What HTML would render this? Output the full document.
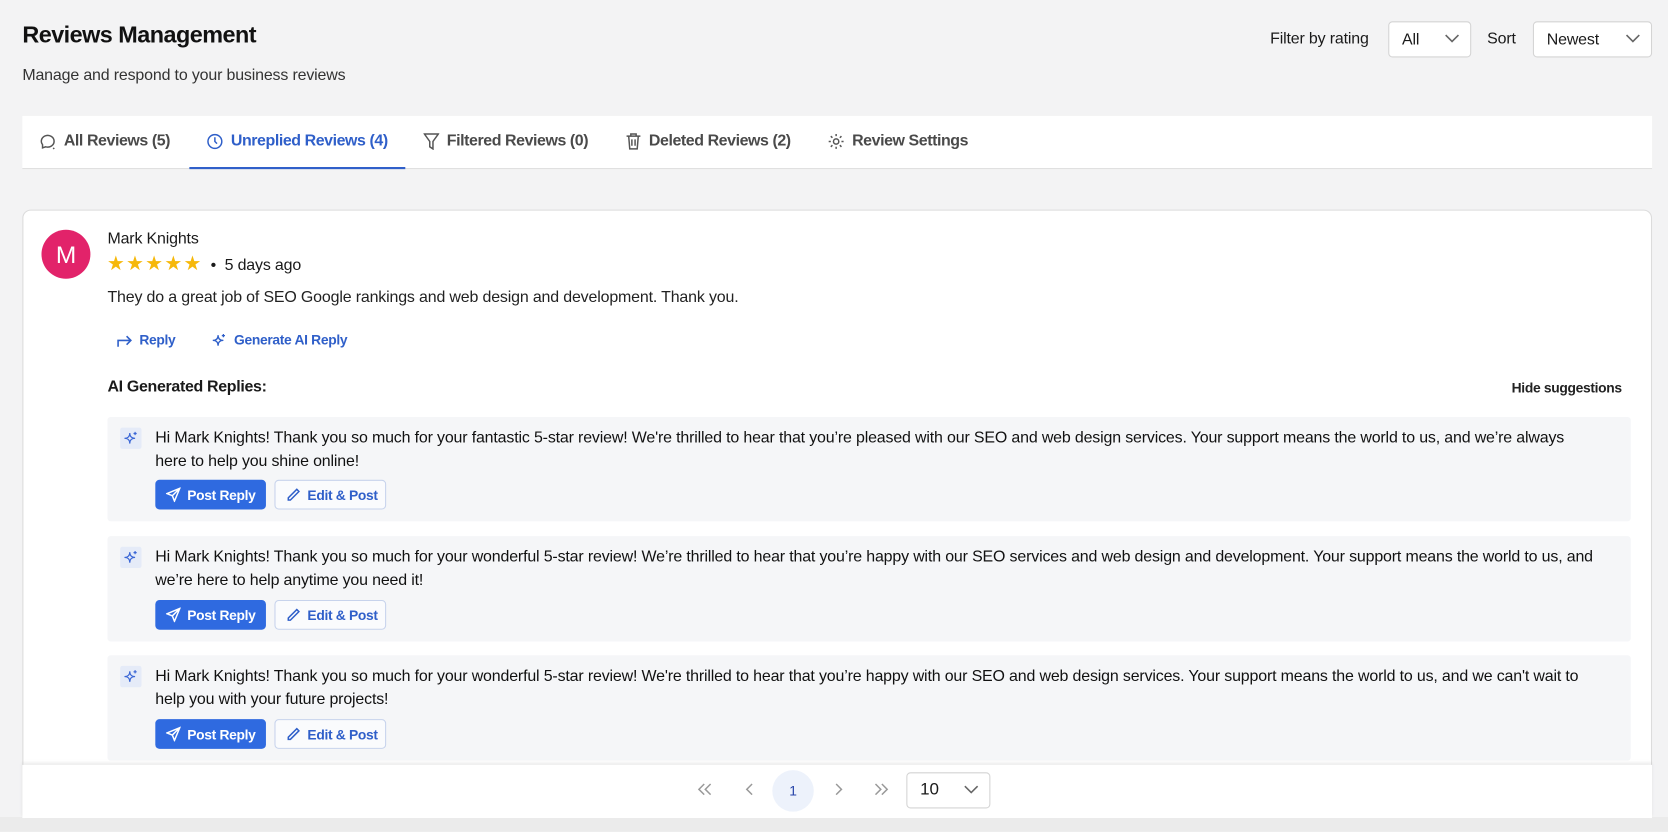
<!DOCTYPE html>
<html><head><meta charset="utf-8"><style>
*{box-sizing:border-box;margin:0;padding:0}
html,body{width:1668px;height:832px;overflow:hidden;background:#f3f3f4;font-family:"Liberation Sans",Arial,sans-serif;color:#1a1a1a}
#w{position:absolute;left:0;top:0;width:1568px;height:782px;overflow:hidden;transform:scale(1.06378);transform-origin:0 0;letter-spacing:-0.15px}
.a{position:absolute}
.sel{position:absolute;background:#fff;border:1px solid #d4d4d4;border-radius:4px;font-size:15px;display:flex;align-items:center;padding-left:12px}
.sel svg{position:absolute;right:10px;top:50%;margin-top:-5px}
.tab{position:absolute;top:124px;font-size:15px;font-weight:bold;color:#4a4a4a;display:flex;align-items:center;gap:7px;letter-spacing:-0.4px}
.sug{position:absolute;left:101px;width:1432px;background:#f5f6f8;border-radius:3px}
.sug .ic{position:absolute;left:12px;top:10px;width:20px;height:20px;background:#e5ebf8;border-radius:2px}
.sug .t{position:absolute;left:45px;top:9px;width:1380px;font-size:15px;line-height:22px;color:#111;white-space:nowrap}
.btn{position:absolute;height:28px;border-radius:4px;font-size:13px;font-weight:bold;display:flex;align-items:center;gap:6px;padding-left:10px;letter-spacing:-0.3px}
.pr{left:45px;width:104px;background:#2f6ae0;color:#fff}
.ep{left:157px;width:105px;background:#fafbfd;border:1px solid #c7d3ec;color:#2f5fc9}
.star{display:inline-block;width:18px;text-align:center}
</style></head><body><div id="w">
<div class="a" style="left:21px;top:20px;font-size:22px;font-weight:bold;color:#111;letter-spacing:-0.5px">Reviews Management</div>
<div class="a" style="left:21px;top:62px;font-size:15px;color:#333">Manage and respond to your business reviews</div>
<div class="a" style="left:1194px;top:28px;font-size:15px">Filter by rating</div>
<div class="sel" style="left:1305px;top:20px;width:78px;height:34px">All<svg width="14" height="9"><path d="M1 1l6 6 6-6" stroke="#666" stroke-width="1.5" fill="none"/></svg></div>
<div class="a" style="left:1398px;top:28px;font-size:15px">Sort</div>
<div class="sel" style="left:1441px;top:20px;width:112px;height:34px">Newest<svg width="14" height="9"><path d="M1 1l6 6 6-6" stroke="#666" stroke-width="1.5" fill="none"/></svg></div>

<div class="a" style="left:21px;top:109px;width:1532px;height:50px;background:#fff;border-bottom:1px solid #ddd"></div>
<div class="a" style="left:178px;top:157px;width:203px;height:2px;background:#2f5fc9"></div>
<div class="tab" style="left:37px"><svg width="16" height="16" fill="none" stroke="#555" stroke-width="1.4"><path d="M3 11a6 5.5 0 1 1 3 2l-3 1z"/><path d="M13 14l1 1"/></svg>All Reviews (5)</div>
<div class="tab" style="left:194px;color:#2f5fc9"><svg width="16" height="16" fill="none" stroke="#2f5fc9" stroke-width="1.4"><circle cx="8" cy="8" r="6.5"/><path d="M8 4v4l2 2"/></svg>Unreplied Reviews (4)</div>
<div class="tab" style="left:398px"><svg width="15" height="16" fill="none" stroke="#555" stroke-width="1.4"><path d="M1 1h13l-5 7v7l-3-2V8z"/></svg>Filtered Reviews (0)</div>
<div class="tab" style="left:588px"><svg width="15" height="16" fill="none" stroke="#555" stroke-width="1.4"><path d="M1 3h13M5 3V1h5v2M3 3l1 12h7l1-12M6 6v6M9 6v6"/></svg>Deleted Reviews (2)</div>
<div class="tab" style="left:778px"><svg width="16" height="16" fill="none" stroke="#555" stroke-width="1.4"><circle cx="8" cy="8" r="2.5"/><path d="M8 1v2M8 13v2M1 8h2M13 8h2M3 3l1.5 1.5M11.5 11.5L13 13M3 13l1.5-1.5M11.5 4.5L13 3"/></svg>Review Settings</div>

<div class="a" style="left:21px;top:197px;width:1532px;height:580px;background:#fff;border:1px solid #dcdcdc;border-radius:8px"></div>
<div class="a" style="left:39px;top:216px;width:46px;height:46px;border-radius:50%;background:#e2236a;color:#fff;font-size:23px;display:flex;align-items:center;justify-content:center">M</div>
<div class="a" style="left:101px;top:216px;font-size:15px">Mark Knights</div>
<div class="a" style="left:100px;top:239px;font-size:19px;color:#f6b80a;line-height:20px;letter-spacing:0"><span class="star">★</span><span class="star">★</span><span class="star">★</span><span class="star">★</span><span class="star">★</span></div>
<div class="a" style="left:198px;top:241px;font-size:15px">•&nbsp; 5 days ago</div>
<div class="a" style="left:101px;top:271px;font-size:15px;color:#222">They do a great job of SEO Google rankings and web design and development. Thank you.</div>
<div class="a" style="left:109px;top:312px;font-size:13px;font-weight:bold;color:#2f5fc9;display:flex;align-items:center;gap:6px;letter-spacing:-0.3px"><svg width="16" height="14" fill="none" stroke="#2f5fc9" stroke-width="1.5"><path d="M2 13V7h12M10 3l4 4-4 4"/></svg>Reply</div>
<div class="a" style="left:199px;top:312px;font-size:13px;font-weight:bold;color:#2f5fc9;display:flex;align-items:center;gap:7px;letter-spacing:-0.3px"><svg width="14" height="14" fill="none" stroke="#2f5fc9" stroke-width="1.2"><path d="M6 2q0 5 -5 5q5 0 5 5q0-5 5-5q-5 0-5-5zM11 1v3M9.5 2.5h3"/></svg>Generate AI Reply</div>
<div class="a" style="left:101px;top:355px;font-size:15px;font-weight:bold;letter-spacing:-0.3px">AI Generated Replies:</div>
<div class="a" style="left:1421px;top:357px;font-size:13px;font-weight:bold;color:#222;letter-spacing:-0.3px">Hide suggestions</div>

<div class="sug" style="top:392px;height:98px"><div class="ic"><svg width="20" height="20" fill="none" stroke="#3a66d6" stroke-width="1.1"><path d="M9 5q0 5-5 5q5 0 5 5q0-5 5-5q-5 0-5-5zM14 4v3M12.5 5.5h3"/></svg></div><div class="t">Hi Mark Knights! Thank you so much for your fantastic 5-star review! We're thrilled to hear that you’re pleased with our SEO and web design services. Your support means the world to us, and we’re always<br>here to help you shine online!</div><div class="btn pr" style="top:59px"><svg width="14" height="14" fill="none" stroke="#fff" stroke-width="1.4"><path d="M13 1L1 6l5 2 2 5zM6 8l7-7"/></svg>Post Reply</div><div class="btn ep" style="top:59px"><svg width="14" height="14" fill="none" stroke="#2f5fc9" stroke-width="1.4"><path d="M10 2l2 2-8 8H2v-2z"/></svg>Edit &amp; Post</div></div>

<div class="sug" style="top:504px;height:99px"><div class="ic"><svg width="20" height="20" fill="none" stroke="#3a66d6" stroke-width="1.1"><path d="M9 5q0 5-5 5q5 0 5 5q0-5 5-5q-5 0-5-5zM14 4v3M12.5 5.5h3"/></svg></div><div class="t">Hi Mark Knights! Thank you so much for your wonderful 5-star review! We’re thrilled to hear that you’re happy with our SEO services and web design and development. Your support means the world to us, and<br>we’re here to help anytime you need it!</div><div class="btn pr" style="top:60px"><svg width="14" height="14" fill="none" stroke="#fff" stroke-width="1.4"><path d="M13 1L1 6l5 2 2 5zM6 8l7-7"/></svg>Post Reply</div><div class="btn ep" style="top:60px"><svg width="14" height="14" fill="none" stroke="#2f5fc9" stroke-width="1.4"><path d="M10 2l2 2-8 8H2v-2z"/></svg>Edit &amp; Post</div></div>

<div class="sug" style="top:616px;height:99px"><div class="ic"><svg width="20" height="20" fill="none" stroke="#3a66d6" stroke-width="1.1"><path d="M9 5q0 5-5 5q5 0 5 5q0-5 5-5q-5 0-5-5zM14 4v3M12.5 5.5h3"/></svg></div><div class="t">Hi Mark Knights! Thank you so much for your wonderful 5-star review! We're thrilled to hear that you’re happy with our SEO and web design services. Your support means the world to us, and we can't wait to<br>help you with your future projects!</div><div class="btn pr" style="top:60px"><svg width="14" height="14" fill="none" stroke="#fff" stroke-width="1.4"><path d="M13 1L1 6l5 2 2 5zM6 8l7-7"/></svg>Post Reply</div><div class="btn ep" style="top:60px"><svg width="14" height="14" fill="none" stroke="#2f5fc9" stroke-width="1.4"><path d="M10 2l2 2-8 8H2v-2z"/></svg>Edit &amp; Post</div></div>

<div class="a" style="left:0;top:768px;width:1568px;height:14px;background:#ebebeb"></div>
<div class="a" style="left:21px;top:719px;width:1532px;height:50px;background:#fff;box-shadow:0 -2px 3px rgba(0,0,0,0.08)"></div>
<svg class="a" style="left:655px;top:735px" width="16" height="14" fill="none" stroke="#999" stroke-width="1.4"><path d="M7 2L2 7l5 5M13 2L8 7l5 5"/></svg>
<svg class="a" style="left:700px;top:735px" width="10" height="14" fill="none" stroke="#999" stroke-width="1.4"><path d="M7 2L2 7l5 5"/></svg>
<div class="a" style="left:726px;top:724px;width:39px;height:39px;border-radius:50%;background:#edf2fb;color:#2744a8;font-size:13px;display:flex;align-items:center;justify-content:center">1</div>
<svg class="a" style="left:783px;top:735px" width="10" height="14" fill="none" stroke="#999" stroke-width="1.4"><path d="M3 2l5 5-5 5"/></svg>
<svg class="a" style="left:820px;top:735px" width="16" height="14" fill="none" stroke="#999" stroke-width="1.4"><path d="M3 2l5 5-5 5M9 2l5 5-5 5"/></svg>
<div class="sel" style="left:852px;top:726px;width:79px;height:34px;font-size:16px">10<svg width="14" height="9"><path d="M1 1l6 6 6-6" stroke="#666" stroke-width="1.5" fill="none"/></svg></div>
</div></body></html>
